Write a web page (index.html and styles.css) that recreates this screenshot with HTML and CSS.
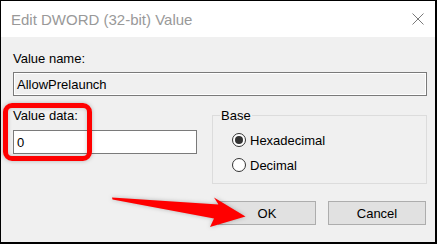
FILE: index.html
```html
<!DOCTYPE html>
<html lang="en">

<head>
  <meta charset="UTF-8">
  <meta name="viewport" content="width=device-width, initial-scale=1.0">
  <title>Edit DWORD (32-bit) Value</title>
  <link rel="stylesheet" href="styles.css">
</head>

<body>
  <div class="shot">
    <div class="dialog">
      <div class="titlebar">
        <span class="title">Edit DWORD (32-bit) Value</span>
        <svg class="close" width="12" height="12" viewBox="0 0 12 12">
          <path d="M0.5 0.5 L11.5 11.5 M11.5 0.5 L0.5 11.5" stroke="#7a7a7a" stroke-width="1" fill="none"/>
        </svg>
      </div>

      <div class="content">
        <label class="label">Value name:</label>
        <div class="field readonly">AllowPrelaunch</div>

        <div class="row">
          <div class="col-data">
            <label class="label">Value data:</label>
            <div class="field">0</div>
          </div>

          <fieldset class="base">
            <legend>Base</legend>
            <div class="radios">
              <div class="option"><span class="radio checked"></span>Hexadecimal</div>
              <div class="option"><span class="radio"></span>Decimal</div>
            </div>
          </fieldset>
        </div>

        <div class="buttons">
          <div class="btn">OK</div>
          <div class="btn">Cancel</div>
        </div>
      </div>
    </div>

    <!-- Markierungen über dem Screenshot -->
    <div class="highlight"></div>
    <svg class="arrow" width="440" height="245" viewBox="0 0 440 245">
      <polygon points="112,197.4 218.5,204.5 214,197.4 245.5,216.6 210,227 214,218.6 112.5,199.4" fill="#ff0000"/>
    </svg>
  </div>
</body>

</html>
```

FILE: styles.css
```css
:root {
  --panel-bg: #f0f0f0;
  --field-border: #7a7a7a;
  --red: #ff0000;
}

body {
  margin: 0;
  background-color: #fff;
  font-family: "Liberation Sans", Arial, Helvetica, sans-serif;
  font-size: 13px;
  line-height: 15px;
  color: #000;
}

.shot {
  position: relative;
  width: 440px;
  height: 245px;
  overflow: hidden;
}

.dialog {
  width: 437px;
  height: 244px;
  box-sizing: border-box;
  border-style: solid;
  border-color: #000;
  border-width: 1px 2px 2px 1px;
  display: flex;
  flex-direction: column;
}

.titlebar {
  height: 36px;
  background-color: #fff;
  display: flex;
  align-items: center;
  justify-content: space-between;
  padding: 0 11px 0 10px;
}

.title {
  font-size: 15px;
  line-height: 17px;
  color: #999;
}

.close {
  display: block;
}

.content {
  flex: 1;
  background-color: var(--panel-bg);
  padding: 14px 8px 0 12px;
}

.label {
  display: block;
}

.field {
  height: 24px;
  box-sizing: border-box;
  border: 1px solid var(--field-border);
  background-color: #fff;
  padding: 0 3px;
  display: flex;
  align-items: center;
}

.readonly {
  margin-top: 6px;
  background-color: var(--panel-bg);
  box-shadow: inset 0 0 0 1px #fff;
}

.row {
  display: flex;
  align-items: flex-start;
  margin-top: 12px;
}

.col-data {
  width: 184px;
}

.col-data .field {
  margin-top: 7px;
}

.base {
  flex: 1;
  margin: 0 0 0 15px;
  padding: 0 0 8px 7px;
  border: 1px solid #dcdcdc;
  min-width: 0;
}

.base legend {
  padding: 0 1px;
}

.radios {
  display: flex;
  flex-direction: column;
  gap: 5px;
  padding: 7px 0 0 12px;
}

.option {
  height: 20px;
  display: flex;
  align-items: center;
  gap: 4px;
}

.radio {
  width: 14px;
  height: 14px;
  box-sizing: border-box;
  border: 1px solid #333;
  border-radius: 50%;
  background-color: #fff;
  display: flex;
  align-items: center;
  justify-content: center;
}

.radio.checked::after {
  content: "";
  width: 8px;
  height: 8px;
  border-radius: 50%;
  background-color: #333;
}

.buttons {
  display: flex;
  justify-content: flex-end;
  gap: 12px;
  margin: 17px 1px 0 0;
}

.btn {
  width: 98px;
  height: 24px;
  box-sizing: border-box;
  border: 1px solid #adadad;
  background-color: #e1e1e1;
  display: flex;
  align-items: center;
  justify-content: center;
}

.highlight {
  position: absolute;
  left: 3px;
  top: 103px;
  width: 89px;
  height: 58px;
  box-sizing: border-box;
  border: 5px solid var(--red);
  border-radius: 9px;
  box-shadow: 0 0 4px rgba(0, 0, 0, 0.25), inset 0 0 4px rgba(0, 0, 0, 0.2);
}

.arrow {
  position: absolute;
  left: 0;
  top: 0;
  filter: drop-shadow(0 0 2px rgba(0, 0, 0, 0.25));
}
```
